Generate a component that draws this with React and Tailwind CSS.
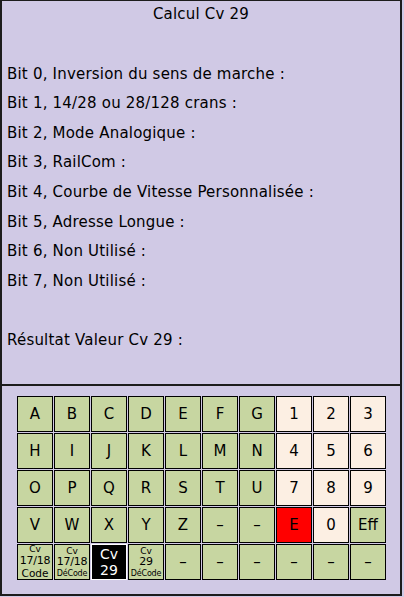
import React from 'react'

const bits = [
  'Bit 0, Inversion du sens de marche :',
  'Bit 1, 14/28 ou 28/128 crans :',
  'Bit 2, Mode Analogique :',
  'Bit 3, RailCom :',
  'Bit 4, Courbe de Vitesse Personnalisée :',
  'Bit 5, Adresse Longue :',
  'Bit 6, Non Utilisé :',
  'Bit 7, Non Utilisé :',
]

const green = 'bg-[#c7d6a1] border-black text-black'
const peach = 'bg-[#fcefe3] border-black text-black'

const rows = [
  ['A', 'B', 'C', 'D', 'E', 'F', 'G', '1', '2', '3'],
  ['H', 'I', 'J', 'K', 'L', 'M', 'N', '4', '5', '6'],
  ['O', 'P', 'Q', 'R', 'S', 'T', 'U', '7', '8', '9'],
]

const Key = ({ children, className }) => (
  <div className={`w-[36px] h-[36px] border flex items-center justify-center text-[15px] leading-none ${className}`}>
    {children}
  </div>
)

const CvKey = ({ num, sub, small }) => (
  <div className={`w-[36px] h-[36px] border flex flex-col items-center justify-center whitespace-nowrap leading-[1.15] ${green}`}>
    <span className="text-[9px]">Cv</span>
    <span className="text-[11px] tracking-[-0.2px]">{num}</span>
    <span className={small ? 'text-[8px] tracking-[-0.2px]' : 'text-[10.5px]'}>{sub}</span>
  </div>
)

export default function App() {
  return (
    <div className="w-[404px] h-[597px] bg-[#d0c9e5]" style={{ fontFamily: '"DejaVu Sans", sans-serif' }}>
      <div className="w-[402px] h-[596px] border-l-2 border-r-2 border-t border-b-2 border-[#1c1c1c] flex flex-col">
        {/* Calcul panel */}
        <div className="h-[385px] border-b-2 border-[#1c1c1c] text-[15px] tracking-[0.2px] text-black">
          <div className="h-[26px] flex items-center justify-center">Calcul Cv 29</div>
          <div className="pt-[32px] pl-[5px]">
            {bits.map((b) => (
              <div key={b} className="h-[29.6px] flex items-center">{b}</div>
            ))}
            <div className="h-[29.6px]" />
            <div className="h-[29.6px] flex items-center">Résultat Valeur Cv 29 :</div>
          </div>
        </div>

        {/* Keyboard */}
        <div className="flex-1 pl-[15px] pt-[10px]">
          <div className="grid grid-cols-[repeat(10,36px)] gap-px">
            {rows.map((r) =>
              r.map((k, i) => (
                <Key key={k} className={i < 7 ? green : peach}>{k}</Key>
              ))
            )}
            {['V', 'W', 'X', 'Y', 'Z', '–', '–'].map((k, i) => (
              <Key key={'r4' + i} className={green}>{k}</Key>
            ))}
            <Key className="bg-[#ff0000] border-black text-black">E</Key>
            <Key className={peach}>0</Key>
            <Key className={green}>Eff</Key>

            <CvKey num="17/18" sub="Code" />
            <CvKey num="17/18" sub="DéCode" small />
            <div className="w-[36px] h-[36px] border border-white bg-black text-white flex flex-col items-center justify-center leading-[1.15]">
              <span className="text-[14px]">Cv</span>
              <span className="text-[14px]">29</span>
            </div>
            <CvKey num="29" sub="DéCode" small />
            {[0, 1, 2, 3, 4, 5].map((i) => (
              <Key key={'r5' + i} className={green}>–</Key>
            ))}
          </div>
        </div>
      </div>
    </div>
  )
}
